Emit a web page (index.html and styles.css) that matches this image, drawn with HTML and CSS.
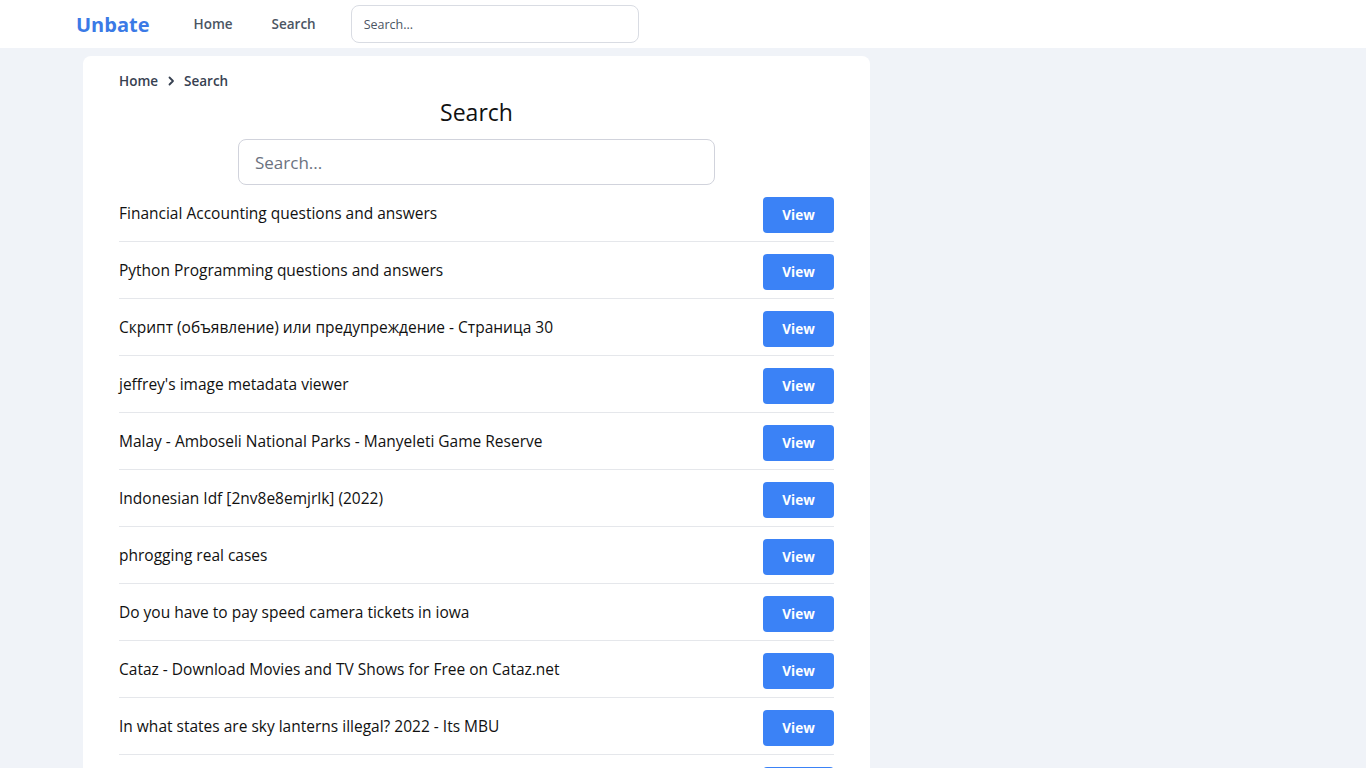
FILE: index.html
```html
<!DOCTYPE html>
<html lang="en">
<head>
<meta charset="utf-8">
<title>Search - Unbate</title>
<link rel="stylesheet" href="styles.css">
</head>
<body>
<header class="topbar">
  <a class="logo" href="#">Unbate</a>
  <nav class="nav">
    <a href="#">Home</a>
    <a href="#">Search</a>
  </nav>
  <input class="top-search" type="text" placeholder="Search...">
</header>
<main class="wrap">
  <section class="card">
    <div class="crumbs">
      <a href="#">Home</a>
      <svg class="chev" viewBox="0 0 10 10" width="10" height="10"><path d="M3.5 1.5 L7 5 L3.5 8.5" fill="none" stroke="#374151" stroke-width="1.8" stroke-linecap="round" stroke-linejoin="round"/></svg>
      <span>Search</span>
    </div>
    <h1 class="title">Search</h1>
    <div class="search-row"><input class="big-search" type="text" placeholder="Search..."></div>
    <ul class="results">
      <li><span>Financial Accounting questions and answers</span><a class="btn" href="#">View</a></li>
      <li><span>Python Programming questions and answers</span><a class="btn" href="#">View</a></li>
      <li><span>Скрипт (объявление) или предупреждение - Страница 30</span><a class="btn" href="#">View</a></li>
      <li><span>jeffrey's image metadata viewer</span><a class="btn" href="#">View</a></li>
      <li><span>Malay - Amboseli National Parks - Manyeleti Game Reserve</span><a class="btn" href="#">View</a></li>
      <li><span>Indonesian Idf [2nv8e8emjrlk] (2022)</span><a class="btn" href="#">View</a></li>
      <li><span>phrogging real cases</span><a class="btn" href="#">View</a></li>
      <li><span>Do you have to pay speed camera tickets in iowa</span><a class="btn" href="#">View</a></li>
      <li><span>Cataz - Download Movies and TV Shows for Free on Cataz.net</span><a class="btn" href="#">View</a></li>
      <li><span>In what states are sky lanterns illegal? 2022 - Its MBU</span><a class="btn" href="#">View</a></li>
      <li><span>How to find the best deals online</span><a class="btn" href="#">View</a></li>
    </ul>
  </section>
</main>
</body>
</html>
```

FILE: styles.css
```css
* { box-sizing: border-box; }
html, body { margin: 0; padding: 0; }
body {
  background: #f0f3f8;
  font-family: "Open Sans", "Noto Sans", sans-serif;
  color: #111827;
  overflow: hidden;
  height: 768px;
}
a { text-decoration: none; color: inherit; }
.topbar {
  height: 48px;
  background: #fff;
  display: flex;
  align-items: center;
  padding-left: 76px;
}
.logo {
  font-size: 20px;
  font-weight: 700;
  color: #3b7ae6;
  letter-spacing: 0;
}
.nav {
  display: flex;
  gap: 39px;
  margin-left: 44px;
}
.nav a {
  font-size: 13.5px;
  font-weight: 600;
  color: #4b5563;
}
.top-search {
  margin-left: 35px;
  width: 288px;
  height: 38px;
  border: 1px solid #d9dce3;
  border-radius: 8px;
  padding: 0 12px;
  font-family: inherit;
  font-size: 12.5px;
  color: #374151;
  outline: none;
}
.top-search::placeholder { color: #4b5563; }
.wrap {
  padding: 8px 0 0 83px;
}
.card {
  width: 787px;
  background: #fff;
  border-radius: 8px;
  padding: 16px 36px 0;
  height: 720px;
}
.crumbs {
  display: flex;
  align-items: center;
  gap: 7px;
  font-size: 13.5px;
  font-weight: 600;
  color: #374151;
  height: 18px;
}
.chev { margin: 0 1px; }
.title {
  text-align: center;
  font-size: 23px;
  font-weight: 400;
  margin: 7px 0 12px;
  line-height: 30px;
  color: #111;
}
.search-row { display: flex; justify-content: center; }
.big-search {
  width: 477px;
  height: 46px;
  border: 1px solid #d1d3dc;
  border-radius: 8px;
  padding: 0 16px;
  font-family: inherit;
  font-size: 17px;
  outline: none;
}
.big-search::placeholder { color: #6b7280; }
.results {
  list-style: none;
  margin: 0;
  padding: 0;
}
.results li {
  display: flex;
  align-items: center;
  justify-content: space-between;
  padding: 12px 0 8px;
  border-bottom: 1px solid #e5e7eb;
  font-size: 15.5px;
  color: #111;
}
.results li span { margin-top: -4px; }
.btn {
  width: 71px;
  height: 36px;
  background: #3b82f6;
  color: #fff;
  border-radius: 4px;
  font-size: 13.5px;
  font-weight: 700;
  display: flex;
  align-items: center;
  justify-content: center;
}
```
